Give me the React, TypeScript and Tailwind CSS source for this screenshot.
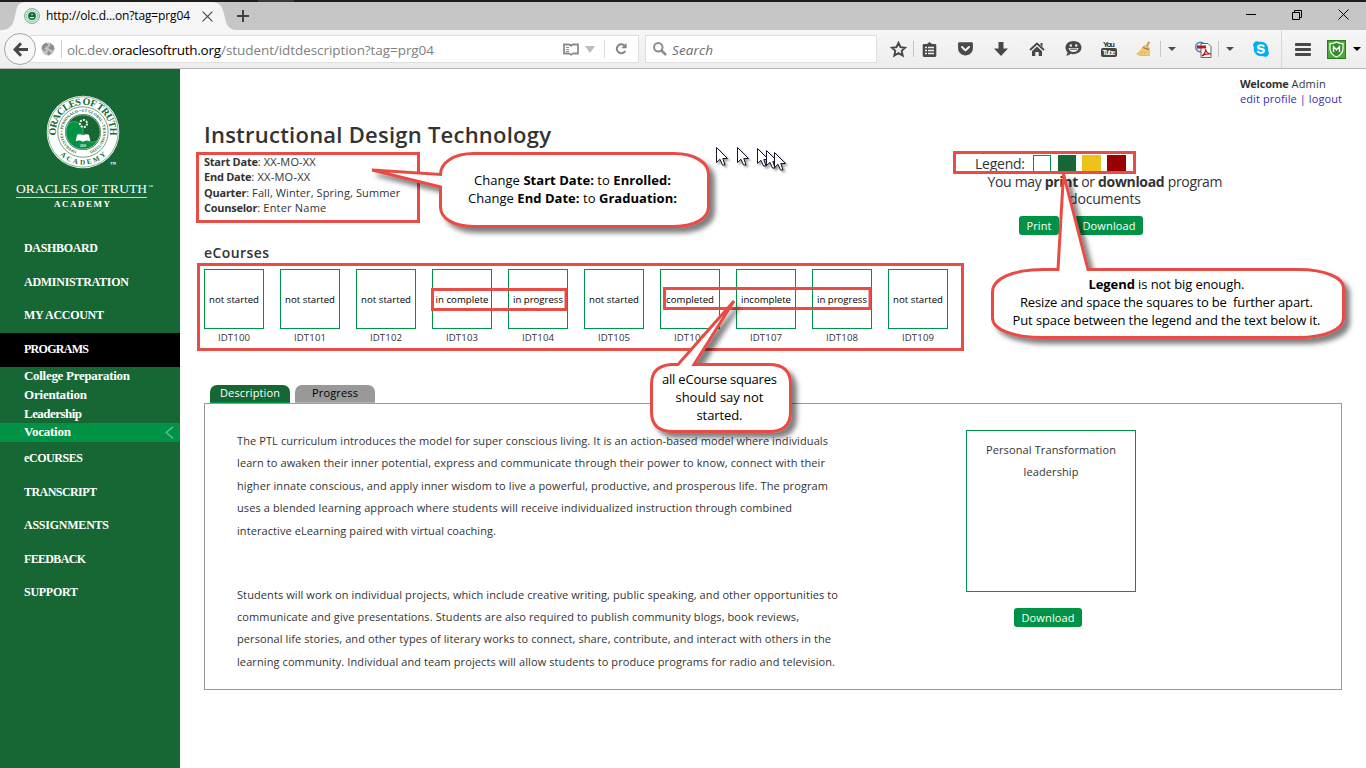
import { useLayoutEffect, useRef, type ReactNode } from "react";
import { FaGetPocket, FaSkype } from "react-icons/fa";

/** Keeps a line of text at a fixed measure by distributing the difference between its letters. */
function Line({ w, className = "", children }: { w: number; className?: string; children: ReactNode }) {
  const ref = useRef<HTMLSpanElement>(null);
  useLayoutEffect(() => {
    const el = ref.current;
    if (!el) return;
    el.style.letterSpacing = "0px";
    el.style.marginRight = "0px";
    const count = Math.max(1, (el.textContent || "").length - 1);
    const gap = (w - el.getBoundingClientRect().width) / count;
    el.style.letterSpacing = gap + "px";
    el.style.marginRight = -gap + "px";
  }, [w]);
  return (
    <span ref={ref} className={"inline-block whitespace-pre " + className}>
      {children}
    </span>
  );
}

function Seal() {
  return (
    <svg width="76" height="76" viewBox="-38 -38 76 76">
      <defs>
        <path id="outerTop" d="M-26.8 4 A27.1 27.1 0 1 1 26.8 4" />
        <path id="outerBottom" d="M-32.5 0 A32.5 32.5 0 0 0 32.5 0" />
        <path id="innerRing" d="M-6 19.3 A20.2 20.2 0 1 1 6 19.3" />
      </defs>
      <circle r="36.3" fill="#fff" />
      <circle r="35.2" fill="none" stroke="#166734" strokeWidth=".5" />
      <circle r="25.2" fill="none" stroke="#166734" strokeWidth=".6" />
      <circle r="18" fill="#166734" />
      <path d="M-17.5 -4 A9 9 0 0 1 0 0 A9 9 0 0 0 17.5 4 A18 18 0 0 1 -17.5 -4Z" fill="#009345" />
      <path d="M-17.5 -4 A9 9 0 0 1 0 0 A9 9 0 0 0 17.5 4" fill="none" stroke="#7fb894" strokeWidth=".6" />
      <circle r="17.2" fill="none" stroke="#fff" strokeWidth=".5" />
      <circle cx="0.5" cy="-8.500" r="3.6" fill="none" stroke="#e6f2ea" strokeWidth="2" strokeDasharray="2 1.2" />
      <path
        d="M0 3.3 C-2.5 1.5 -5.5 2.2 -6 3.2 L-7.4 9.2 C-4.5 8 -2 8.4 0 10 C2 8.4 4.5 8 7.4 9.2 L6 3.2 C5.5 2.2 2.5 1.5 0 3.3Z"
        fill="#fff"
      />
      <g className="font-['Liberation_Serif']" fill="#166734" textAnchor="middle">
        <text fontSize="10" fontWeight="700">
          <textPath href="#outerTop" startOffset="50%" textLength="92">ORACLES OF TRUTH</textPath>
        </text>
        <text fontSize="7" fontWeight="700">
          <textPath href="#outerBottom" startOffset="50%" textLength="51">ACADEMY</textPath>
        </text>
        <text fontSize="4">
          <textPath href="#innerRing" startOffset="50%" textLength="113">OPERANTES • PERSONALIS • ET GLOBAL • TRANSMUTATIO</textPath>
        </text>
      </g>
      <text x="0" y="15" fontSize="3" fill="#fff" textAnchor="middle">2010</text>
    </svg>
  );
}

const navTop: [string, number][] = [["DASHBOARD", 74], ["ADMINISTRATION", 105], ["MY ACCOUNT", 80]];
const navSub: [string, number][] = [["College Preparation", 106], ["Orientation", 63], ["Leadership", 58], ["Vocation", 47]];
const navBottom: [string, number][] = [["eCOURSES", 59], ["TRANSCRIPT", 73], ["ASSIGNMENTS", 85], ["FEEDBACK", 62], ["SUPPORT", 54]];

function NavItem({ label, w }: { label: string; w: number }) {
  return (
    <div className="flex h-[33.6px] items-center pb-px pl-6">
      <Line w={w}>{label}</Line>
    </div>
  );
}

function Sidebar() {
  return (
    <aside className="flex w-[180px] shrink-0 flex-col bg-[#166734] font-['Liberation_Serif',serif] text-[12px] font-bold text-white">
      <div className="flex h-[163px] flex-col pt-[25px]">
        <div className="flex items-end pl-[45px]">
          <Seal />
          <span className="-ml-[11px] mb-[2px] text-[6px] leading-[8px]">™</span>
        </div>
        <div className="mt-[12px] flex h-[14px] items-center pl-4 text-[13.500px] font-normal leading-[14px]">
          <Line w={131}>ORACLES OF TRUTH</Line>
          <span className="mb-1 ml-px text-[5px]">™</span>
        </div>
        <div className="ml-4 mt-px h-px w-[131px] bg-[#c5d9cc]" />
        <div className="flex h-[14px] items-center pl-[54px] text-[9px]">
          <Line w={56}>ACADEMY</Line>
        </div>
      </div>
      <nav>
        {navTop.map(([l, w]) => <NavItem key={l} label={l} w={w} />)}
        <div className="flex h-[34px] items-center bg-black pb-px pl-6">
          <Line w={65}>PROGRAMS</Line>
        </div>
        {navSub.map(([l, w]) => (
          <div
            key={l}
            className={"flex h-[18.75px] items-center justify-between pl-6 pr-[6px] text-[13px] leading-[18px] " + (l === "Vocation" ? "bg-[#009345]" : "")}
          >
            <Line w={w}>{l}</Line>
            {l === "Vocation" && (
              <svg width="9" height="13" viewBox="0 0 9 13" fill="none" stroke="#6fbf91" strokeWidth="1.3">
                <path d="M8 .7 1.2 6.5 8 12.3" />
              </svg>
            )}
          </div>
        ))}
        {navBottom.map(([l, w]) => <NavItem key={l} label={l} w={w} />)}
      </nav>
    </aside>
  );
}

function Slot({ className, children }: { className: string; children?: ReactNode }) {
  return <div className={"flex h-full shrink-0 items-center justify-center " + className}>{children}</div>;
}

const Sep = ({ className = "" }: { className?: string }) => <div className={"h-4 w-px shrink-0 bg-[#c3c7cd] " + className} />;

const Caret = ({ fill = "#4d4d4d" }: { fill?: string }) => (
  <svg width="8" height="4" viewBox="0 0 8 4"><path d="M0 0h8L4 4z" fill={fill} /></svg>
);

function Chrome() {
  return (
    <header className="flex h-[69px] shrink-0 flex-col font-['Open_Sans',sans-serif]">
      <div className="flex h-[2px] shrink-0 bg-[#1f1d1c]">
        <div className="ml-[258px] h-full w-9 bg-[#3b3938]" />
      </div>
      <div className="relative flex h-7 shrink-0 items-center bg-[#c6c6c6]">
        <svg className="absolute left-0 top-0" width="240" height="28" viewBox="0 0 240 28">
          <path d="M0 28C12 28 13 22 15.500 12C17 4 18 0 27 0H211C220 0 222 4 224 12C226.500 22 227 28 238 28Z" fill="#f5f5f5" />
        </svg>
        <div className="relative flex w-full items-center pl-[24px]">
          <svg width="16" height="16" viewBox="0 0 16 16">
            <circle cx="8" cy="8" r="7.500" fill="#dcebe1" stroke="#7fb191" strokeWidth="1" />
            <circle cx="8" cy="8" r="5.600" fill="none" stroke="#5d9c75" strokeWidth=".7" strokeDasharray="1.500 .7" />
            <circle cx="8" cy="8" r="3.900" fill="#136b37" />
            <circle cx="8" cy="6.600" r="1" fill="#8fc7a4" />
            <path d="M5.500 9h5l-1 1.300h-3z" fill="#d9efe0" />
          </svg>
          <Line w={144} className="ml-[6px] text-[12px] leading-[18px] text-black">http://olc.d...on?tag=prg04</Line>
          <svg className="ml-[12px]" width="11" height="11" viewBox="0 0 11 11" stroke="#4a4a4a" strokeWidth="1.200">
            <path d="M.6.6 10.400 10.400M10.400.6.6 10.400" />
          </svg>
          <svg className="ml-[24px]" width="12" height="12" viewBox="0 0 12 12" stroke="#3f3f3f" strokeWidth="2">
            <path d="M6 0v12M0 6h12" />
          </svg>
          <div className="ml-auto flex items-center gap-[36px] pb-[3px] pr-[17px]">
            <svg width="10" height="10" viewBox="0 0 10 10"><path d="M0 4.500h10" stroke="#000" /></svg>
            <svg width="10" height="10" viewBox="0 0 10 10" fill="none" stroke="#000">
              <path d="M.5 2.500h7v7h-7zM2.500 2.500v-2h7v7h-2" />
            </svg>
            <svg width="11" height="11" viewBox="0 0 11 11" stroke="#000"><path d="M.5.5l10 10M10.500.5l-10 10" /></svg>
          </div>
        </div>
      </div>
      <div className="flex h-[39px] shrink-0 items-center border-b border-[#b7b7b7] bg-gradient-to-b from-[#f6f6f6] to-[#ededed]">
        <div className="relative z-10 ml-1 flex h-8 w-8 shrink-0 items-center justify-center rounded-full border border-[#a6a6a6] bg-[#f7f7f7]">
          <svg width="15" height="15" viewBox="0 0 15 15" fill="none" stroke="#484848" strokeWidth="3">
            <path d="M8 1.200 2 7.500 8 13.800M2.500 7.500H15" />
          </svg>
        </div>
        <div className="-ml-[6px] flex h-7 w-[609px] shrink-0 items-center border border-[#dedede] bg-white">
          <svg className="ml-[10px]" width="14" height="14" viewBox="0 0 14 14">
            <circle cx="7" cy="7" r="6.500" fill="#c4c4c4" />
            <path d="M5 .8C2 1.500.5 4.500.7 6.500L3 9l1.500.2L5 8 3.300 6.500 5 5l2-1.200-.2-1.600ZM8.500 1l4 2.500 1 3-2 2.500-1.500-1.500-2-.3L7.500 5l2-1.500ZM7 9l2 .5 1 1.700-2.500 2.300-1.500-2Z" fill="#8f8f8f" />
          </svg>
          <div className="ml-[6px] h-[18px] w-px bg-[#d0d0d0]" />
          <div className="ml-[5px] flex pt-px text-[13.500px] leading-[20px] text-[#808080]">
            <Line w={45}>olc.dev.</Line>
            <Line w={109} className="text-black">oraclesoftruth.org</Line>
            <Line w={213}>/student/idtdescription?tag=prg04</Line>
          </div>
          <svg className="ml-auto" width="16" height="13" viewBox="0 0 16 13" fill="none" stroke="#8c8c8c">
            <path d="M1 1.500h4.500Q8 1.500 8 3.500 8 1.500 10.500 1.500H15V10.500H10Q8 11 8 12.500 8 11 6 10.500H1Z" strokeWidth="1.800" />
            <path d="M3 4.500h3M3 6.500h3M3 8.500h3" />
          </svg>
          <svg className="ml-[6px]" width="10" height="7" viewBox="0 0 10 7"><path d="M0 0h10L5 7z" fill="#bdbdbd" /></svg>
          <div className="ml-[9px] h-[18px] w-px bg-[#dadada]" />
          <svg className="ml-[10px] mr-[11px]" width="12" height="12" viewBox="0 0 12 12">
            <path d="M10 3.200A4.500 4.500 0 1 0 10.200 8" fill="none" stroke="#858585" strokeWidth="2" />
            <path d="M11.600 0v5.300H6.300z" fill="#858585" />
          </svg>
        </div>
        <div className="ml-[6px] flex h-7 w-[232px] shrink-0 items-center border border-[#dedede] bg-white pl-[7px]">
          <svg width="14" height="14" viewBox="0 0 14 14" fill="none" stroke="#8c8c8c">
            <circle cx="5.300" cy="5.300" r="4.200" strokeWidth="2" />
            <path d="M8.500 8.500 13 13" strokeWidth="2.500" />
          </svg>
          <Line w={41} className="ml-[5px] pt-px text-[13.500px] italic leading-[20px] text-[#6b6b6b]">Search</Line>
        </div>
        <div className="flex h-full items-center text-[#4a4a4a]">
          <Slot className="ml-[6px] w-[30px]">
            <svg width="17" height="17" viewBox="0 0 17 17" fill="none" stroke="#484848" strokeWidth="1.900">
              <path d="M8.500 1.800 10.500 6.200 15.200 6.700 11.700 9.900 12.700 14.600 8.500 12.200 4.300 14.600 5.300 9.900 1.800 6.700 6.500 6.200Z" />
            </svg>
          </Slot>
          <Sep />
          <Slot className="w-[30px]">
            <svg width="15" height="15" viewBox="0 0 15 15">
              <path d="M5 2 7.500 0 10 2h3q1.300 0 1.300 1.300v10Q14.300 15 13 15H2Q.7 15 .7 13.300v-10Q.7 2 2 2Z" fill="#484848" />
              <path d="M3 5.500h9M3 8.500h9M3 11.500h9" stroke="#f1f1f1" strokeWidth="1.700" />
              <path d="M5.500 4v9.500" stroke="#484848" />
            </svg>
          </Slot>
          <Slot className="ml-[3px] w-9 pb-px"><FaGetPocket size={17} /></Slot>
          <Slot className="w-9">
            <svg width="14" height="14" viewBox="0 0 14 14"><path d="M4.500 0h5v6.500H14L7 14 0 6.500h4.500z" fill="#484848" /></svg>
          </Slot>
          <Slot className="w-9">
            <svg width="16" height="14" viewBox="0 0 16 14">
              <path d="M1 8 8 1.500 15 8" fill="none" stroke="#484848" strokeWidth="1.800" />
              <path d="M3 9.200 8 4.600l5 4.600V14H9.700v-4H6.300v4H3zM11.500 1h2v4l-2-2z" fill="#484848" />
            </svg>
          </Slot>
          <Slot className="w-9 pb-px">
            <svg width="17" height="15" viewBox="0 0 17 15">
              <path d="M8.500 0C13 0 16.500 2.800 16.500 6.600S13 13.200 8.500 13.200C7 13.200 6.300 13 5.500 12.700 4 14.200 2.400 14.700.8 14.600 2 13.700 2.500 12.500 2.500 11.200 1.200 10 .5 8.500.5 6.600.5 2.800 4 0 8.500 0Z" fill="#484848" />
              <circle cx="5.800" cy="4.500" r="1.200" fill="#f1f1f1" /><circle cx="11.200" cy="4.500" r="1.200" fill="#f1f1f1" />
              <path d="M3.500 7h10c-.5 2.800-2.400 4-5 4s-4.500-1.200-5-4Z" fill="#f1f1f1" />
              <path d="M5 8.200h7" stroke="#484848" />
            </svg>
          </Slot>
          <Slot className="w-9">
            <div className="flex flex-col items-center font-['Liberation_Sans_Narrow','Liberation_Sans',sans-serif] text-[8px] font-bold leading-[7px] text-[#333]">
              <Line w={12}>You</Line>
              <div className="flex h-[9px] w-4 items-center justify-center rounded-[2px] bg-[#444] text-[7px] text-white">
                <Line w={13}>Tube</Line>
              </div>
            </div>
          </Slot>
          <Slot className="w-[33px]">
            <svg width="15" height="16" viewBox="0 0 15 16">
              <path d="M13.200.8 10.800 5.500" stroke="#d9a64a" strokeWidth="2.400" />
              <path d="M8 4.500 13 6.500 13.500 14.500H4L.8 13Q5.500 10 8 4.500Z" fill="#f3cd72" stroke="#d6a242" strokeWidth=".6" />
              <path d="M7 6.500 13 8.700" stroke="#b9615a" strokeWidth="1.300" />
              <path d="M4 13.500 8 9.500M8 13.500 10 10.500" stroke="#d19a3b" strokeWidth=".7" />
            </svg>
          </Slot>
          <Sep />
          <Slot className="w-[21px]"><Caret /></Slot>
          <Slot className="ml-[6px] w-[30px]">
            <svg width="17" height="17" viewBox="0 0 17 17">
              <circle cx="5.500" cy="6" r="4.800" fill="#dbe8f7" stroke="#457fc6" strokeWidth="1.400" />
              <path d="M6 2.500h7l3 3v11H6Z" fill="#fff" stroke="#555" strokeWidth=".9" />
              <path d="M2 4.500h9v3H2z" fill="#c91414" />
              <path d="M7 15C10 12.500 11 10.500 10.500 8 11 11 13 12.500 16 13 13 12.500 9.500 13 7 15Z" fill="none" stroke="#c91414" strokeWidth="1.200" />
            </svg>
          </Slot>
          <Sep />
          <Slot className="w-[21px]"><Caret /></Slot>
          <Slot className="ml-[6px] w-[30px] text-[#00aff0]">
            <svg width="18" height="18" viewBox="0 0 18 18" className="shrink-0">
              <circle cx="9" cy="9" r="6" fill="#fff" />
              <FaSkype size={18} />
            </svg>
          </Slot>
          <div className="ml-[5px] h-full w-px bg-[#d8d8d8]" />
          <Slot className="ml-[6px] w-[30px]">
            <svg width="16" height="13" viewBox="0 0 16 13"><path d="M1 1.500h14M1 6.500h14M1 11.500h14" stroke="#484848" strokeWidth="2.800" strokeLinecap="round" /></svg>
          </Slot>
          <Slot className="ml-[9px] w-[19px]">
            <svg width="19" height="19" viewBox="0 0 19 19">
              <rect x=".5" y=".5" width="18" height="18" fill="#4caa35" stroke="#287c1e" />
              <path d="M3 3.500Q6.500 4 9.500 2 12.500 4 16 3.500V9Q15.500 14.500 9.500 17 3.500 14.500 3 9Z" fill="#348c2a" stroke="#fff" strokeWidth="1.200" />
              <path d="M6.500 12V6.800L9.500 9.800 12.500 6.800V12" fill="none" stroke="#fff" strokeWidth="1.400" />
            </svg>
          </Slot>
          <Slot className="ml-[6px] w-[10px]"><Caret fill="#000" /></Slot>
        </div>
      </div>
    </header>
  );
}

const courses: [string, string, number][] = [
  ["not started", "IDT100", 50], ["not started", "IDT101", 50], ["not started", "IDT102", 50],
  ["in complete", "IDT103", 53], ["in progress", "IDT104", 50], ["not started", "IDT105", 50],
  ["completed", "IDT106", 48], ["incomplete", "IDT107", 50], ["in progress", "IDT108", 50], ["not started", "IDT109", 50],
];

const para1: [string, number][] = [
  ["The PTL curriculum introduces the model for super conscious living. It is an action-based model where individuals", 591],
  ["learn to awaken their inner potential, express and communicate through their power to know, connect with their", 588],
  ["higher innate conscious, and apply inner wisdom to live a powerful, productive, and prosperous life. The program", 591],
  ["uses a blended learning approach where students will receive individualized instruction through combined", 555],
  ["interactive eLearning paired with virtual coaching.", 259],
];
const para2: [string, number][] = [
  ["Students will work on individual projects, which include creative writing, public speaking, and other opportunities to", 601],
  ["communicate and give presentations. Students are also required to publish community blogs, book reviews,", 562],
  ["personal life stories, and other types of literary works to connect, share, contribute, and interact with others in the", 594],
  ["learning community. Individual and team projects will allow students to produce programs for radio and television.", 598],
];

function Paragraph({ lines }: { lines: [string, number][] }) {
  return (
    <div>
      {lines.map(([t, w]) => (
        <div key={t} className="flex h-[22.4px] items-center"><Line w={w}>{t}</Line></div>
      ))}
    </div>
  );
}

function Button({ label, className, w }: { label: string; className: string; w: number }) {
  return (
    <button className={"flex h-[19px] items-center justify-center rounded-[3px] bg-[#009345] text-[11px] leading-[19px] text-white " + className}>
      <Line w={w}>{label}</Line>
    </button>
  );
}

const Strong = ({ children }: { children: ReactNode }) => <b className="tracking-[-0.25px]">{children}</b>;

function Content() {
  return (
    <main className="flex flex-1 flex-col pl-6 pr-6 font-['Open_Sans',sans-serif] text-[11px] text-[#333]">
      <div className="flex h-[168px]">
        <div className="w-[749px] pt-[49px]">
          <h1 className="flex h-8 items-center text-[22px] font-semibold leading-8">
            <Line w={347}>Instructional Design Technology</Line>
          </h1>
          <div className="mt-[4px] leading-[15.300px]">
            <div className="flex"><Line w={113}><Strong>Start Date</Strong>: XX-MO-XX</Line></div>
            <div className="flex"><Line w={108}><Strong>End Date</Strong>: XX-MO-XX</Line></div>
            <div className="flex"><Line w={197}><Strong>Quarter</Strong>: Fall, Winter, Spring, Summer</Line></div>
            <div className="flex"><Line w={124}><Strong>Counselor</Strong>: Enter Name</Line></div>
          </div>
        </div>
        <div className="flex flex-1 flex-col">
          <div className="flex h-[86px] flex-col items-start self-end pt-[7px] leading-[15px]">
            <Line w={87}><Strong>Welcome</Strong> Admin</Line>
            <Line w={102} className="text-[#3a2cb8]">edit profile | logout</Line>
          </div>
          <div className="flex h-[17px] items-center pl-[22px]">
            <Line w={50} className="text-[14px] leading-[17px]">Legend:</Line>
            <div className="ml-2 h-[17px] w-[18px] border border-[#009345]" />
            <div className="ml-[7px] h-[17px] w-[18px] bg-[#166734]" />
            <div className="ml-[6px] h-[17px] w-[19px] bg-[#edc31b]" />
            <div className="ml-[6px] h-[17px] w-[19px] bg-[#990000]" />
          </div>
          <div className="flex w-[304px] flex-col items-center pt-px text-[14px] leading-[17px]">
            <Line w={235}>You may <b>print</b> or <b>download</b> program</Line>
            <Line w={72}>documents</Line>
          </div>
          <div className="flex gap-4 pl-[66px] pt-[9px]">
            <Button label="Print" className="w-10" w={25} />
            <Button label="Download" className="w-[68px]" w={53} />
          </div>
        </div>
      </div>
      <h2 className="flex h-8 items-center pb-px text-[14px] font-semibold"><Line w={65}>eCourses</Line></h2>
      <div className="flex h-[116px] gap-4">
        {courses.map(([status, id, w]) => (
          <div key={id} className="flex w-[60px] flex-col items-center text-[9.600px]">
            <div className="flex h-[60px] w-[60px] items-center justify-center border border-[#009345] pt-[2px] text-black">
              <Line w={w}>{status}</Line>
            </div>
            <div className="flex h-[17px] items-center pt-[2px]"><Line w={32}>{id}</Line></div>
          </div>
        ))}
      </div>
      <div className="flex h-[18px] gap-[5px] pl-[6px] text-center leading-[15px]">
        <div className="w-20 rounded-t-[7px] border-b border-[#009345] bg-[#166734] text-white"><Line w={60}>Description</Line></div>
        <div className="w-20 rounded-t-[7px] border-b border-[#b5b5b5] bg-[#999] text-black"><Line w={46}>Progress</Line></div>
      </div>
      <section className="flex h-[287px] w-[1138px] border border-[#999]">
        <div className="flex w-[761px] flex-col gap-[41.700px] pl-8 pt-[26px]">
          <Paragraph lines={para1} />
          <Paragraph lines={para2} />
        </div>
        <div className="flex w-[170px] flex-col items-center pt-[26px]">
          <div className="flex h-[162px] w-[170px] flex-col items-center border border-[#009345] pt-[8px] leading-[22px]">
            <Line w={130}>Personal Transformation</Line>
            <Line w={55}>leadership</Line>
          </div>
          <Button label="Download" className="mr-[6px] mt-4 w-[68px]" w={53} />
        </div>
      </section>
    </main>
  );
}

const cursors: [number, number][] = [[716, 147], [737, 147], [757, 148], [766, 150], [774, 152]];

function Annotations() {
  return (
    <div className="pointer-events-none absolute inset-0 font-['Open_Sans',sans-serif] text-[13px] leading-[18px] text-black">
      <svg className="absolute inset-0" width="1366" height="768" viewBox="0 0 1366 768" fill="none" stroke="#e84c45" strokeWidth="3">
        <defs>
          <filter id="shade" x="-10%" y="-10%" width="125%" height="135%">
            <feDropShadow dx="5" dy="5" stdDeviation="2.500" floodColor="#000" floodOpacity=".5" />
          </filter>
        </defs>
        <path d="M197.500 153.500h221v68h-221zM198.500 264.500h764v85h-764zM432.500 289.500h133.500v20H432.500zM664.500 288.500h205.500v20H664.500zM954.500 152.500h180v20h-180z" />
        <g fill="#fff" filter="url(#shade)">
          <path d="M474 153.500H674C695 153.500 708.500 163 708.500 174V207C708.500 218 695 226.500 674 226.500H474C453 226.500 440.500 218 440.500 207V187L372 170 440.500 174.500C440.500 163 453 153.500 474 153.500Z" />
        </g>
        <g fill="#fff" filter="url(#shade)">
          <path d="M671 364.500H678L734 301 694 364.500H769Q790.500 364.500 790.500 384V412Q790.500 431.500 769 431.500H673Q651.500 431.500 651.500 412V384Q651.500 366 671 364.500Z" />
        </g>
        <g fill="#fff" filter="url(#shade)">
          <path d="M1043 269.500H1058L1063.500 174 1088 269.500H1298C1326 269.500 1343.500 278 1343.500 288V318C1343.500 329 1326 337.500 1298 337.500H1043C1012 337.500 992.500 329 992.500 318V292C992.500 279 1012 269.500 1043 269.500Z" />
        </g>
        <g fill="#fff" stroke="#14142a" strokeWidth="1">
          {cursors.map(([x, y]) => (
            <path
              key={x}
              transform={"translate(" + x + " " + y + ")"}
              d="M.5.5V15.500L4 12.300 6.500 18H9L6.800 11.500H11.500Z"
              className="drop-shadow-[2px_2px_1px_rgba(0,0,0,0.35)]"
            />
          ))}
        </g>
      </svg>
      <div className="absolute left-[440px] top-[171px] flex w-[265px] flex-col items-center">
        <Line w={197}>Change <b>Start Date:</b> to <b>Enrolled:</b></Line>
        <Line w={209}>Change <b>End Date:</b> to <b>Graduation:</b></Line>
      </div>
      <div className="absolute left-[652px] top-[370px] flex w-[135px] flex-col items-center">
        <Line w={115}>all eCourse squares</Line>
        <Line w={88}>should say not</Line>
        <Line w={46}>started.</Line>
      </div>
      <div className="absolute left-[992px] top-[275px] flex w-[349px] flex-col items-center">
        <Line w={156}><b>Legend</b> is not big enough.</Line>
        <Line w={293}>Resize and space the squares to be  further apart.</Line>
        <Line w={308}>Put space between the legend and the text below it.</Line>
      </div>
    </div>
  );
}

export default function App() {
  return (
    <div className="relative flex h-[768px] w-[1366px] flex-col overflow-hidden bg-white">
      <Chrome />
      <div className="flex flex-1">
        <Sidebar />
        <Content />
      </div>
      <Annotations />
    </div>
  );
}
